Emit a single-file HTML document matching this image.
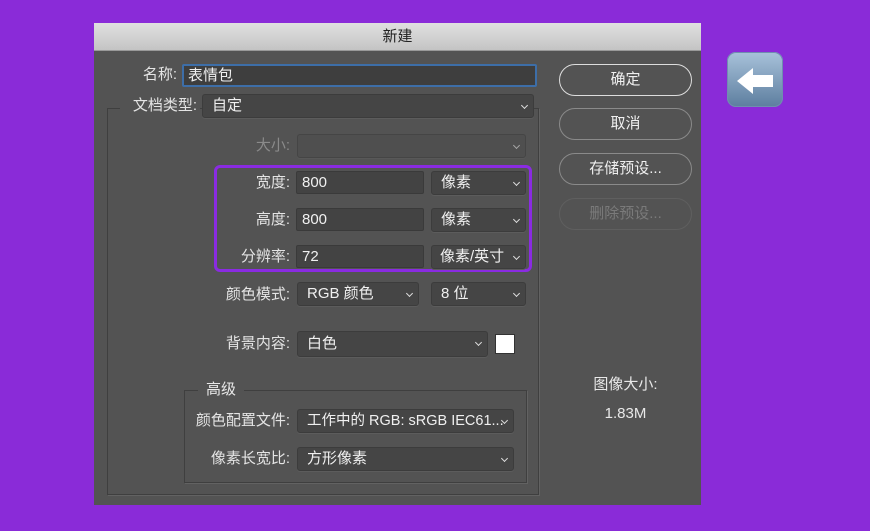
<!DOCTYPE html>
<html><head><meta charset="utf-8"><style>
body{margin:0;width:870px;height:531px;background:#8a2bd8;position:relative;overflow:hidden;font-family:"Liberation Sans","Noto Sans CJK SC",sans-serif;font-size:15px;color:#e8e8e8}
.a{position:absolute;box-sizing:border-box}
.dlg{left:94px;top:23px;width:607px;height:482px;background:#535353}
.title{left:94px;top:23px;width:607px;height:28px;background:linear-gradient(#e0e0e0,#c4c4c4);color:#222;text-align:center;line-height:28px;font-size:15px;border-bottom:1px solid #999}
.lbl{text-align:right;line-height:24px;color:#e4e4e4}
.in{background:#434343;border:1px solid #3a3a3a;border-radius:2px;padding-left:5px;line-height:22px;color:#f0f0f0}
.sel{background:#454545;border:1px solid #3c3c3c;border-radius:3px;padding-left:9px;line-height:22px;color:#f0f0f0;box-shadow:0 1px 0 #5c5c5c}
.sel:after{content:"";position:absolute;right:6px;top:8px;width:4px;height:4px;border-right:1.3px solid #ddd;border-bottom:1.3px solid #ddd;transform:rotate(45deg)}
.btn{left:559px;width:133px;height:32px;border:1px solid #8a8a8a;border-radius:16px;text-align:center;line-height:30px;color:#f0f0f0}
.grp{border:1px solid #3f3f3f;box-shadow:1px 1px 0 #626262}
</style></head><body>
<div class="a dlg"></div>
<div class="a title">新建</div>
<div class="a grp" style="left:107px;top:108px;width:432px;height:387px"></div>
<div class="a grp" style="left:184px;top:390px;width:343px;height:93px"></div>

<div class="a lbl" style="left:110px;top:63px;width:67px">名称:</div>
<div class="a in" style="left:182px;top:64px;width:355px;height:23px;border:2px solid #3d6ea8;background:#3e3e3e;line-height:19px;padding-left:4px">表情包</div>
<div class="a" style="left:120px;top:96px;width:80px;height:22px;background:#535353"></div>
<div class="a lbl" style="left:110px;top:94px;width:87px">文档类型:</div>
<div class="a sel" style="left:202px;top:94px;width:332px;height:24px">自定</div>
<div class="a lbl" style="left:200px;top:134px;width:90px;color:#8a8a8a">大小:</div>
<div class="a sel" style="left:297px;top:134px;width:229px;height:24px;background:#4d4d4d;opacity:.6"></div>

<div class="a" style="left:214px;top:165px;width:318px;height:107px;border:3px solid #8a2be2;border-radius:6px"></div>
<div class="a lbl" style="left:200px;top:171px;width:90px">宽度:</div>
<div class="a in" style="left:296px;top:171px;width:128px;height:23px">800</div>
<div class="a sel" style="left:431px;top:171px;width:95px;height:24px">像素</div>
<div class="a lbl" style="left:200px;top:208px;width:90px">高度:</div>
<div class="a in" style="left:296px;top:208px;width:128px;height:23px">800</div>
<div class="a sel" style="left:431px;top:208px;width:95px;height:24px">像素</div>
<div class="a lbl" style="left:200px;top:245px;width:90px">分辨率:</div>
<div class="a in" style="left:296px;top:245px;width:128px;height:23px">72</div>
<div class="a sel" style="left:431px;top:245px;width:95px;height:24px;padding-left:8px">像素/英寸</div>

<div class="a lbl" style="left:200px;top:283px;width:90px">颜色模式:</div>
<div class="a sel" style="left:297px;top:282px;width:122px;height:24px">RGB 颜色</div>
<div class="a sel" style="left:431px;top:282px;width:95px;height:24px">8 位</div>
<div class="a lbl" style="left:200px;top:332px;width:90px">背景内容:</div>
<div class="a sel" style="left:297px;top:331px;width:191px;height:26px;line-height:24px">白色</div>
<div class="a" style="left:495px;top:334px;width:20px;height:20px;background:#fff;border:1px solid #333"></div>

<div class="a" style="left:198px;top:380px;width:46px;height:20px;background:#535353;line-height:20px;text-align:center">高级</div>
<div class="a lbl" style="left:186px;top:409px;width:104px">颜色配置文件:</div>
<div class="a sel" style="left:297px;top:409px;width:217px;height:24px;white-space:nowrap;overflow:hidden;font-size:14.5px">工作中的 RGB: sRGB IEC61...</div>
<div class="a lbl" style="left:190px;top:447px;width:100px">像素长宽比:</div>
<div class="a sel" style="left:297px;top:447px;width:217px;height:24px">方形像素</div>

<div class="a btn" style="top:64px;border:1.5px solid #ddd">确定</div>
<div class="a btn" style="top:108px">取消</div>
<div class="a btn" style="top:153px">存储预设...</div>
<div class="a btn" style="top:198px;border-color:#5f5f5f;color:#7a7a7a">删除预设...</div>
<div class="a" style="left:559px;top:375px;width:133px;text-align:center;line-height:20px">图像大小:</div>
<div class="a" style="left:559px;top:404px;width:133px;text-align:center;line-height:20px">1.83M</div>

<div class="a" style="left:727px;top:52px;width:56px;height:55px;border-radius:9px;background:linear-gradient(#a8c2da,#5d7e9f);box-shadow:inset 0 0 0 1px #6f8db0"></div>
<svg class="a" style="left:727px;top:52px" width="56" height="55"><polygon points="10,29 26,16 26,23 46,23 46,35 26,35 26,42" fill="#fff"/></svg>
</body></html>
